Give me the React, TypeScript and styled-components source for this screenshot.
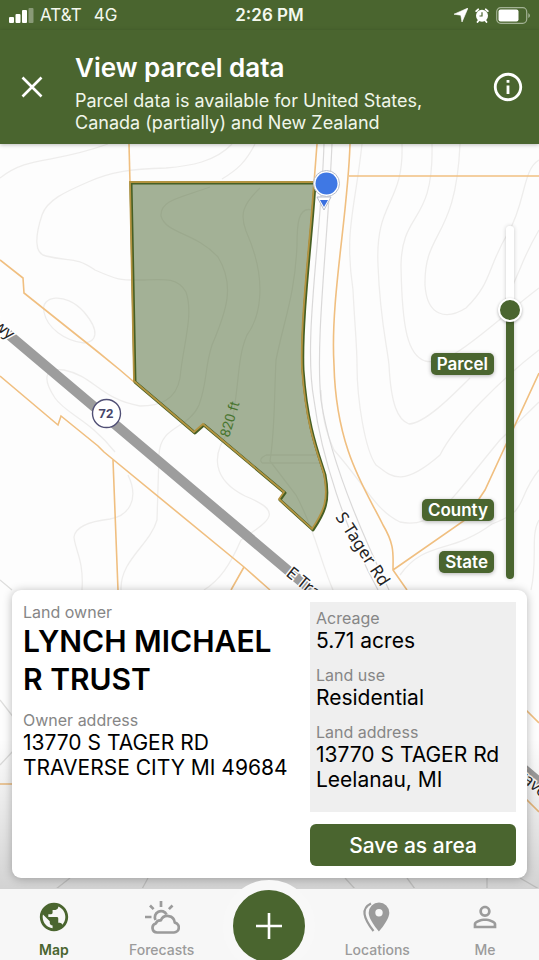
import React, { useState } from "react";
import styled, { createGlobalStyle } from "styled-components";
import { MdPublic, MdOutlineInfo, MdPersonOutline } from "react-icons/md";

const green = "#4a652f";

const GlobalStyle = createGlobalStyle`
  * { box-sizing: border-box; }
  body { margin: 0; font-family: Inter, "Liberation Sans", sans-serif; background: #f7f7f7; color: #000; }
  button { font: inherit; border: 0; padding: 0; cursor: pointer; }
  p, h1, h2, dl, dt, dd { margin: 0; font-weight: 400; }
`;

const Screen = styled.div`
  min-height: 100vh;
  display: flex;
  flex-direction: column;
`;

const StatusBar = styled.div`
  display: grid;
  grid-template-columns: 1fr auto 1fr;
  align-items: center;
  height: 30px;
  padding: 0 9px;
  background: ${green};
  color: #f4f8ee;
  font-size: 17px;
  line-height: 20px;
`;

const Carrier = styled.div`
  display: flex;
  align-items: center;
  gap: 6px;
`;

const Network = styled.span`
  margin-left: 6px;
`;

const Clock = styled.span`
  font-weight: 600;
`;

const StatusIcons = styled.div`
  display: flex;
  justify-content: flex-end;
  align-items: center;
  gap: 7px;
`;

const Header = styled.header`
  position: relative;
  z-index: 1;
  display: flex;
  align-items: center;
  min-height: 114px;
  padding: 0 14px 0 20px;
  background: ${green};
  color: #fff;
  box-shadow: 0 1px 4px rgba(0, 0, 0, 0.25);
`;

const IconButton = styled.button`
  display: flex;
  flex: none;
  background: none;
  color: #fff;
`;

const Heading = styled.div`
  flex: 1;
  padding: 14px 0 4px 31px;
`;

const Title = styled.h1`
  font-size: 26px;
  line-height: 36px;
  padding-bottom: 4px;
  font-weight: 600;
`;

const Subtitle = styled.p`
  font-size: 18px;
  line-height: 22px;
  max-width: 380px;
  color: #f1f6ea;
`;

const MapArea = styled.main`
  position: relative;
  flex: 1;
  display: flex;
  flex-direction: column;
  justify-content: space-between;
  gap: 11px;
  padding: 82px 12px 11px;
  background: #fdfdfd;
  overflow: hidden;
`;

const MapCanvas = styled.svg`
  position: absolute;
  inset: 0;
  width: 100%;
  height: 100%;
`;

const MapFade = styled.div`
  position: absolute;
  inset: auto 0 0;
  height: 150px;
  background: linear-gradient(rgba(0, 0, 0, 0), rgba(0, 0, 0, 0.17));
`;

const LayerControl = styled.div`
  position: relative;
  display: flex;
  justify-content: flex-end;
  gap: 4px;
  height: 353px;
  padding-right: 5px;
`;

const LayerLabels = styled.div`
  display: grid;
  grid-template-rows: 146px 52px 22px;
  align-content: end;
  justify-items: end;
  padding-bottom: 6px;
`;

const LayerTag = styled.button`
  height: 22px;
  padding: 0 6px;
  border-radius: 5px;
  background: ${green};
  color: #fff;
  font-size: 17px;
  line-height: 22px;
  font-weight: 600;
  box-shadow: 0 1px 4px rgba(0, 0, 0, 0.3);
`;

const LayerSlider = styled.input`
  appearance: none;
  writing-mode: vertical-lr;
  direction: rtl;
  width: 24px;
  height: 100%;
  margin: 0;
  background: none;

  &::-webkit-slider-runnable-track {
    width: 8px;
    height: 100%;
    border-radius: 4px;
    background: linear-gradient(to top, ${green} var(--level), #fff var(--level));
    box-shadow: 0 0 4px rgba(0, 0, 0, 0.2);
  }

  &::-webkit-slider-thumb {
    appearance: none;
    width: 24px;
    height: 24px;
    margin-left: -8px;
    border: 2px solid #fff;
    border-radius: 50%;
    background: ${green};
    box-shadow: 0 1px 3px rgba(0, 0, 0, 0.3);
  }
`;

const Card = styled.section`
  position: relative;
  display: grid;
  grid-template-columns: minmax(0, 1fr) minmax(0, 206px);
  column-gap: 12px;
  padding: 12px 11px;
  border-radius: 9px;
  background: #fff;
  box-shadow: 0 1px 10px rgba(0, 0, 0, 0.28);
`;

const Fields = styled.dl`
  display: flex;
  flex-direction: column;
  gap: 12px;
`;

const Details = styled(Fields)`
  min-height: 210px;
  padding: 6px;
  background: #efefef;
`;

const Side = styled.div`
  display: flex;
  flex-direction: column;
  gap: 12px;
`;

const FieldLabel = styled.dt`
  font-size: 16px;
  line-height: 20px;
  color: #868686;
`;

const FieldValue = styled.dd<{ $large?: boolean }>`
  font-size: ${(p) => (p.$large ? 30 : 21)}px;
  line-height: ${(p) => (p.$large ? 38 : 25)}px;
  font-weight: ${(p) => (p.$large ? 600 : 400)};
  white-space: pre-line;
`;

const SaveButton = styled.button`
  height: 42px;
  border-radius: 6px;
  background: ${green};
  color: #fff;
  font-size: 21px;
  font-weight: 500;
`;

const TabBar = styled.nav`
  position: relative;
  display: grid;
  grid-template-columns: repeat(5, 1fr);
  height: 71px;
  background: #f7f7f7;
  box-shadow: 0 -1px 0 #d2d2d2;
`;

const Tab = styled.a<{ $active?: boolean }>`
  display: flex;
  flex-direction: column;
  align-items: center;
  gap: 6px;
  padding-top: 11px;
  color: ${(p) => (p.$active ? green : "#9b9b9b")};
  font-size: 14px;
  line-height: 20px;
  font-weight: ${(p) => (p.$active ? 600 : 500)};
  text-decoration: none;
`;

const AddSlot = styled.div`
  display: flex;
  justify-content: center;
  align-items: flex-start;
`;

const AddButton = styled.button`
  flex: none;
  display: flex;
  align-items: center;
  justify-content: center;
  width: 92px;
  height: 92px;
  margin-top: -9px;
  border: 10px solid #f8f8f8;
  border-radius: 50%;
  background: ${green};
  color: #fff;
`;

const contours = [
  "M0 178C30 155 50 165 108 144",
  "M232 144C215 162 190 166 166 168C130 169 110 172 88 182C65 192 47 200 42 215C35 236 34 254 46 256C70 262 75 256 95 270C120 281 120 280 145 280C165 279 178 278 186 292C194 315 183 345 180 378C176 400 160 406 140 406C100 399 94 376 64 370C43 367 43 380 55 398C66 414 90 420 115 452",
  "M210 187C180 198 160 200 161 216C166 234 195 232 218 257C235 285 227 310 212 345C204 370 208 380 199 405C188 430 160 425 159 455L157 520C150 545 120 560 121 590",
  "M255 144C246 162 237 170 222 179M260 188C242 205 240 215 246 231C270 285 258 320 247 335C236 360 240 390 230 430C210 455 213 480 245 496C285 512 270 520 241 540C230 565 220 580 204 590",
  "M312 210C298 206 297 225 297 245C295 295 284 320 276 360C274 400 275 430 270 461L296 495C315 530 320 560 333 590",
  "M362 144C355 210 344 230 353 290C355 330 357 345 357 365",
  "M402 144C404 205 375 200 378 265C380 320 387 345 389 365C391 405 398 420 409 424C425 423 450 398 470 378",
  "M432 144C434 225 402 210 401 265C402 330 408 355 425 361C450 368 490 325 539 288",
  "M460 144C456 240 424 230 425 285C427 317 447 320 466 308C492 283 487 268 508 233C526 203 522 170 539 160",
  "M539 230C520 262 522 270 505 300M539 350C500 380 455 425 440 455C400 490 390 475 376 465C365 450 357 400 357 365",
  "M321 390C322 415 325 430 334 450C365 485 375 510 400 522C435 530 450 500 500 440L539 402",
  "M539 470C515 500 530 510 492 524C450 555 425 540 400 575M539 520C530 535 538 560 531 590",
  "M44 312C40 296 65 291 84 312C101 332 96 342 84 343C65 341 47 328 44 312",
  "M128 475C140 500 128 516 110 519C85 522 75 528 74 537C75 550 84 560 82 590",
  "M266 455h52M262 463h58M266 455q-8 4-4 8",
];

const boundaries = [
  "M129 144L130 183",
  "M0 260L23 278L24 293L98 352L120 370L134 382",
  "M0 376L58 425L61 416L98 446L104 452L244 567L270 590",
  "M113 460L118 590M244 567L231 590",
  "M317 144L314 183M350 144C348 215 330 300 334 365C336 450 366 490 383 525C395 545 393 555 393 570L407 590M393 570L465 520L485 490L539 373",
  "M349 176H539",
  "M526 710L539 723M526 799L539 812M0 784H14",
];

const parcel =
  "M131 183H315C312 235 301 320 303 370C307 425 317 450 325 475C330 501 325 512 313 530L280 500L285 493L204 425L195 433L135 382Z";

function ParcelMap() {
  return (
    <MapCanvas viewBox="0 144 539 745" preserveAspectRatio="xMidYMin slice" aria-label="Parcel map">
      <g fill="none" stroke="#eeedec" strokeWidth="1.3">
        {contours.map((d) => <path key={d} d={d} />)}
        <path d="M0 580L12 590M0 700L14 718M0 765L14 750M70 878L56 889M148 878L142 889M345 878L355 889M407 878L415 889M487 878V889M520 878L539 889" stroke="#dededd" />
      </g>
      <path d="M324 144C321 240 303 340 314 400C321 455 345 530 378 590M332 144C328 240 315 340 321 400C330 460 360 530 389 590" fill="none" stroke="#dad9d9" strokeWidth="1.2" />
      <g fill="none" stroke="#f0bf80" strokeWidth="1.6">
        {boundaries.map((d) => <path key={d} d={d} />)}
      </g>
      <path d="M8 334L310 589L545 787" fill="none" stroke="#9d9d9d" strokeWidth="10" />
      <path d={parcel} fill="#4a652f" fillOpacity=".5" stroke="#465f24" strokeWidth="3" strokeLinejoin="round" />
      <path d={parcel} transform="translate(-1 -1)" fill="none" stroke="#b39340" strokeWidth="1.8" />
      <circle cx="106.500" cy="413.500" r="14" fill="#fff" stroke="#504f75" strokeWidth="1.4" />
      <g fontFamily="Roboto, sans-serif">
        <text x="106" y="418" textAnchor="middle" fontSize="13" fontWeight="700" fill="#46456a">72</text>
        <text transform="translate(229 438) rotate(-73)" fontSize="14" fill="#48752f">820 ft</text>
      </g>
      <g fontFamily="'Noto Sans', sans-serif" fontSize="17" fill="#252525" stroke="#fff" strokeWidth="3" paintOrder="stroke">
        <text transform="translate(335 517) rotate(57)">S Tager Rd</text>
        <text transform="translate(285 575) rotate(39)">E Traverse Hwy</text>
        <text transform="translate(9 340) rotate(40)" textAnchor="end" fontSize="16">Hwy</text>
        <text transform="translate(511 772) rotate(40)" fontSize="16">Traverse</text>
      </g>
      <path d="M317 197L331 197L324 210Z" fill="#fff" stroke="#b7bdcb" strokeWidth="1" strokeLinejoin="round" />
      <path d="M320 200H328L324 207Z" fill="#3a70df" />
      <circle cx="326.500" cy="183.500" r="13" fill="#fff" stroke="#b7bdcb" />
      <circle cx="326.500" cy="183.500" r="11" fill="#3f78e4" />
    </MapCanvas>
  );
}

function SignalIcon() {
  return (
    <svg width="25" height="16" viewBox="0 0 25 16" fill="#fff" aria-hidden="true">
      <rect y="10" width="5" height="6" rx="1" />
      <rect x="6.500" y="7" width="5" height="9" rx="1" />
      <rect x="13" y="3" width="5" height="13" rx="1" />
      <rect x="19.500" y="1" width="5" height="15" rx="1" opacity=".35" />
    </svg>
  );
}

function ArrowIcon() {
  return (
    <svg width="14" height="14" viewBox="0 0 14 14" fill="#fff" aria-hidden="true">
      <path d="M14 0L0 6.200L6.800 7.200L8 14Z" stroke="#fff" strokeWidth=".6" />
    </svg>
  );
}

function AlarmIcon() {
  return (
    <svg width="14" height="15" viewBox="0 0 14 15" aria-hidden="true">
      <path d="M1.200 3.200L3.200 1.300M12.800 3.200L10.800 1.300M2.500 14L4 12M11.500 14L10 12" stroke="#fff" strokeWidth="1.800" strokeLinecap="round" />
      <circle cx="7" cy="7.800" r="6" fill="#fff" />
      <path d="M7 4.200V8H4.500" fill="none" stroke={green} strokeWidth="1.200" />
    </svg>
  );
}

function BatteryIcon() {
  return (
    <svg width="34" height="17" viewBox="0 0 34 17" aria-hidden="true">
      <rect x=".7" y=".7" width="30" height="15.600" rx="4" fill="none" stroke="#a3b294" strokeWidth="1.200" />
      <rect x="2.500" y="2.500" width="20" height="12" rx="2" fill="#fff" />
      <path d="M32.300 6V11Q34 10 34 8.500T32.300 6" fill="#a3b294" />
    </svg>
  );
}

function CloseIcon() {
  return (
    <svg width="24" height="24" viewBox="0 0 24 24" stroke="currentColor" strokeWidth="2.600" aria-hidden="true">
      <path d="M2.500 2.500L21.500 21.500M21.500 2.500L2.500 21.500" />
    </svg>
  );
}

function ForecastIcon() {
  return (
    <svg width="36" height="34" viewBox="0 0 36 34" fill="none" stroke="currentColor" strokeWidth="2.700" aria-hidden="true">
      <path d="M17 1V7M6 5.500L9.600 9.100M28.500 5.500L24.900 9.100M1 17H7.500M11.500 20A6 6 0 1 1 22.600 14.500" />
      <path d="M13 32.500H30A5 5 0 0 0 30.800 22.600A7.300 7.300 0 0 0 16.800 20.500A4.800 4.800 0 0 0 11.800 23.500A4.600 4.600 0 0 0 13 32.500Z" strokeLinejoin="round" />
    </svg>
  );
}

function LocationsIcon() {
  return (
    <svg width="34" height="34" viewBox="0 0 34 34" aria-hidden="true">
      <path fill="currentColor" fillRule="evenodd" d="M19 2.500A10.300 10.300 0 0 1 29.300 12.800C29.300 20 19 31.500 19 31.500S8.700 20 8.700 12.800A10.300 10.300 0 0 1 19 2.500ZM19 9A3.700 3.700 0 1 0 19 16.400A3.700 3.700 0 0 0 19 9Z" />
      <path d="M11 3.500C1 8.500 3 17.500 13.500 31" fill="none" stroke="currentColor" strokeWidth="2.200" />
    </svg>
  );
}

function PlusIcon() {
  return (
    <svg width="26" height="26" viewBox="0 0 26 26" stroke="currentColor" strokeWidth="2.600" aria-hidden="true">
      <path d="M13 0V26M0 13H26" />
    </svg>
  );
}

const details = [
  { label: "Acreage", value: "5.71 acres" },
  { label: "Land use", value: "Residential" },
  { label: "Land address", value: "13770 S TAGER Rd\nLeelanau, MI" },
];

export default function App() {
  const [level, setLevel] = useState(78);

  return (
    <Screen>
      <GlobalStyle />
      <StatusBar>
        <Carrier>
          <SignalIcon />
          <span>AT&amp;T</span>
          <Network>4G</Network>
        </Carrier>
        <Clock>2:26 PM</Clock>
        <StatusIcons>
          <ArrowIcon />
          <AlarmIcon />
          <BatteryIcon />
        </StatusIcons>
      </StatusBar>
      <Header>
        <IconButton aria-label="Close"><CloseIcon /></IconButton>
        <Heading>
          <Title>View parcel data</Title>
          <Subtitle>Parcel data is available for United States, Canada (partially) and New Zealand</Subtitle>
        </Heading>
        <IconButton aria-label="Information"><MdOutlineInfo size={34} /></IconButton>
      </Header>
      <MapArea>
        <ParcelMap />
        <MapFade />
        <LayerControl>
          <LayerLabels>
            <LayerTag onClick={() => setLevel(60)}>Parcel</LayerTag>
            <LayerTag onClick={() => setLevel(18)}>County</LayerTag>
            <LayerTag onClick={() => setLevel(2)}>State</LayerTag>
          </LayerLabels>
          <LayerSlider
            type="range"
            aria-label="Map zoom level"
            value={level}
            onChange={(e) => setLevel(Number(e.target.value))}
            style={{ "--level": `${level}%` } as React.CSSProperties}
          />
        </LayerControl>
        <Card>
          <Fields>
            <div>
              <FieldLabel>Land owner</FieldLabel>
              <FieldValue $large>LYNCH MICHAEL R TRUST</FieldValue>
            </div>
            <div>
              <FieldLabel>Owner address</FieldLabel>
              <FieldValue>{"13770 S TAGER RD\nTRAVERSE CITY MI 49684"}</FieldValue>
            </div>
          </Fields>
          <Side>
            <Details>
              {details.map((item) => (
                <div key={item.label}>
                  <FieldLabel>{item.label}</FieldLabel>
                  <FieldValue>{item.value}</FieldValue>
                </div>
              ))}
            </Details>
            <SaveButton>Save as area</SaveButton>
          </Side>
        </Card>
      </MapArea>
      <TabBar>
        <Tab href="#map" $active><MdPublic size={34} />Map</Tab>
        <Tab href="#forecasts"><ForecastIcon />Forecasts</Tab>
        <AddSlot>
          <AddButton aria-label="Add"><PlusIcon /></AddButton>
        </AddSlot>
        <Tab href="#locations"><LocationsIcon />Locations</Tab>
        <Tab href="#me"><MdPersonOutline size={34} />Me</Tab>
      </TabBar>
    </Screen>
  );
}
